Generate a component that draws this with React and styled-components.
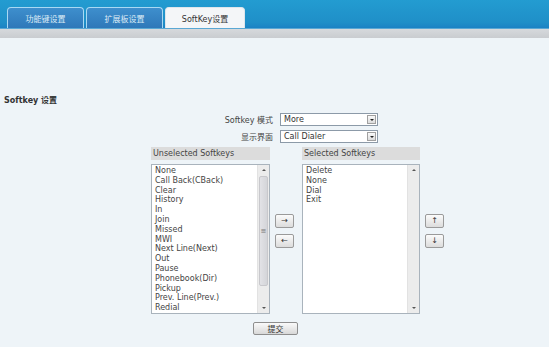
import React from 'react';
import styled, { createGlobalStyle } from 'styled-components';

const GlobalStyle = createGlobalStyle`
  html, body {
    margin: 0;
    padding: 0;
    background: #eef4f8;
    font-family: "DejaVu Sans", Verdana, "Noto Sans CJK SC", sans-serif;
    font-size: 8px;
    color: #444;
  }
`;

const Page = styled.div`
  width: 549px;
  height: 347px;
  overflow: hidden;
  background: #eef4f8;
`;

const TopBar = styled.div`
  height: 28px;
  padding-left: 7px;
  display: flex;
  align-items: flex-end;
  gap: 2px;
  background: linear-gradient(#239cd1, #1f8fc8 80%, #1b82c4);
  border-bottom: 1px solid #5aa8d4;
`;

const Tab = styled.div`
  width: ${({ active }) => (active ? 80 : 77)}px;
  height: 21px;
  box-sizing: border-box;
  display: flex;
  align-items: center;
  justify-content: center;
  border: 1px solid ${({ active }) => (active ? '#dfe6ec' : '#a9d9f3')};
  border-bottom: none;
  border-radius: 4px 4px 0 0;
  background: ${({ active }) =>
    active ? '#f4f6f8' : 'linear-gradient(#3e8fcd, #2f78b9)'};
  color: ${({ active }) => (active ? '#333' : '#dcebf6')};
  font-size: 8px;
`;

const GrayBand = styled.div`
  height: 9px;
  background: linear-gradient(#d6d9dc, #c9ccd0);
`;

const Content = styled.div`
  padding-top: 58px;
`;

const Title = styled.div`
  padding-left: 4px;
  font-weight: bold;
  color: #333;
  line-height: 10px;
  height: 10px;
`;

const Form = styled.div`
  padding-left: 151px;
  margin-top: 7px;
`;

const FieldRow = styled.div`
  display: grid;
  grid-template-columns: 122px 98px;
  column-gap: 7px;
  align-items: center;
  height: 13px;
  margin-bottom: 4px;
`;

const Label = styled.div`
  text-align: right;
  color: #444;
`;

const SelectBox = styled.div`
  height: 13px;
  box-sizing: border-box;
  border: 1px solid #8c9aa8;
  background: #fff;
  display: flex;
  align-items: center;
  justify-content: space-between;
  padding: 0 1px 0 3px;
  color: #333;
`;

const SelectArrow = styled.span`
  width: 9px;
  height: 9px;
  box-sizing: border-box;
  border: 1px solid #a0a0a0;
  background: linear-gradient(#fafafa, #dcdcdc);
  display: flex;
  align-items: center;
  justify-content: center;
  &::after {
    content: '';
    border-left: 2px solid transparent;
    border-right: 2px solid transparent;
    border-top: 2px solid #222;
  }
`;

const Lists = styled.div`
  display: flex;
  align-items: center;
  margin-top: 1px;
`;

const ListColumn = styled.div`
  width: ${({ w }) => w}px;
  display: flex;
  flex-direction: column;
`;

const ListHeader = styled.div`
  height: 13px;
  line-height: 13px;
  background: #dcdcdc;
  padding-left: 2px;
  color: #444;
  margin-bottom: 4px;
`;

const ListBox = styled.div`
  height: 150px;
  box-sizing: border-box;
  border: 1px solid #a9b3bc;
  background: #fff;
  display: flex;
  overflow: hidden;
`;

const Items = styled.div`
  flex: 1;
  padding: 1px 3px 0;
  overflow: hidden;
`;

const Item = styled.div`
  line-height: 9.8px;
  height: 9.8px;
  color: #444;
  white-space: nowrap;
`;

const Scrollbar = styled.div`
  width: 11px;
  display: flex;
  flex-direction: column;
  background: #ececec;
  border-left: 1px solid #e2e2e2;
`;

const ScrollBtn = styled.div`
  height: 10px;
  display: flex;
  align-items: center;
  justify-content: center;
  &::after {
    content: '';
    border-left: 2px solid transparent;
    border-right: 2px solid transparent;
    ${({ dir }) =>
      dir === 'up' ? 'border-bottom: 2px solid #555;' : 'border-top: 2px solid #555;'}
  }
`;

const Track = styled.div`
  flex: 1;
  display: flex;
  flex-direction: column;
`;

const Thumb = styled.div`
  height: 110px;
  margin: 1px 1px 0;
  box-sizing: border-box;
  border: 1px solid #c8c8cc;
  border-radius: 2px;
  background: linear-gradient(90deg, #e2e2e6, #d4d5d9);
  display: flex;
  align-items: center;
  justify-content: center;
  color: #777;
  font-size: 7px;
  line-height: 7px;
`;

const ButtonStack = styled.div`
  display: flex;
  flex-direction: column;
  gap: 6px;
  margin: 0 ${({ right }) => right}px 0 ${({ left }) => left}px;
`;

const SmallButton = styled.div`
  width: 19px;
  height: 14px;
  box-sizing: border-box;
  border: 1px solid #9a9a9a;
  border-radius: 2px;
  background: linear-gradient(#fbfbfb, #dcdcdc);
  display: flex;
  align-items: center;
  justify-content: center;
  color: #333;
  font-size: 8px;
  line-height: 8px;
`;

const SubmitRow = styled.div`
  display: flex;
  justify-content: center;
  margin-top: 8px;
  padding-left: 2px;
`;

const SubmitButton = styled.div`
  width: 45px;
  height: 13px;
  box-sizing: border-box;
  border: 1px solid #8e8e8e;
  border-radius: 2px;
  background: linear-gradient(#fafafa, #d8d8d8);
  display: flex;
  align-items: center;
  justify-content: center;
  color: #333;
  font-size: 8px;
`;

const unselected = [
  'None',
  'Call Back(CBack)',
  'Clear',
  'History',
  'In',
  'Join',
  'Missed',
  'MWI',
  'Next Line(Next)',
  'Out',
  'Pause',
  'Phonebook(Dir)',
  'Pickup',
  'Prev. Line(Prev.)',
  'Redial',
];

const selected = ['Delete', 'None', 'Dial', 'Exit'];

const Select = ({ value }) => (
  <SelectBox>
    <span>{value}</span>
    <SelectArrow />
  </SelectBox>
);

const List = ({ items, withThumb }) => (
  <ListBox>
    <Items>
      {items.map((it, i) => (
        <Item key={i}>{it}</Item>
      ))}
    </Items>
    <Scrollbar>
      <ScrollBtn dir="up" />
      <Track>{withThumb && <Thumb>≡</Thumb>}</Track>
      <ScrollBtn dir="down" />
    </Scrollbar>
  </ListBox>
);

const App = () => (
  <Page>
    <GlobalStyle />
    <TopBar>
      <Tab>功能键设置</Tab>
      <Tab>扩展板设置</Tab>
      <Tab active>SoftKey设置</Tab>
    </TopBar>
    <GrayBand />
    <Content>
      <Title>Softkey 设置</Title>
      <Form>
        <FieldRow>
          <Label>Softkey 模式</Label>
          <Select value="More" />
        </FieldRow>
        <FieldRow>
          <Label>显示界面</Label>
          <Select value="Call Dialer" />
        </FieldRow>
        <Lists>
          <ListColumn w={119}>
            <ListHeader>Unselected Softkeys</ListHeader>
            <List items={unselected} withThumb />
          </ListColumn>
          <ButtonStack left={5} right={8}>
            <SmallButton>→</SmallButton>
            <SmallButton>←</SmallButton>
          </ButtonStack>
          <ListColumn w={118}>
            <ListHeader>Selected Softkeys</ListHeader>
            <List items={selected} />
          </ListColumn>
          <ButtonStack left={5} right={0}>
            <SmallButton>↑</SmallButton>
            <SmallButton>↓</SmallButton>
          </ButtonStack>
        </Lists>
      </Form>
      <SubmitRow>
        <SubmitButton>提交</SubmitButton>
      </SubmitRow>
    </Content>
  </Page>
);

export default App;
